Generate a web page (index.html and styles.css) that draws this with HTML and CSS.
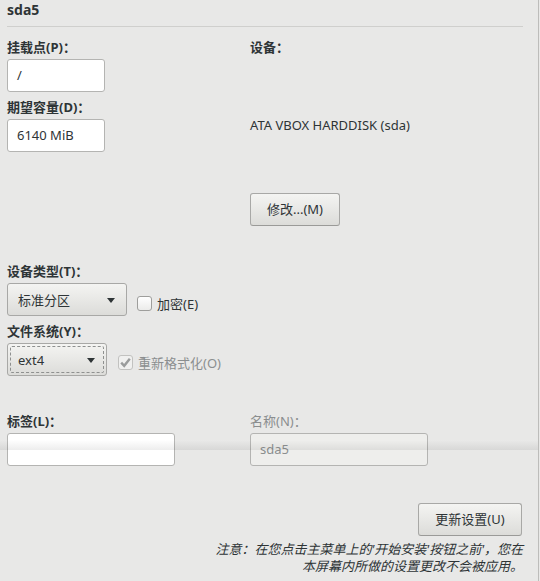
FILE: index.html
```html
<!DOCTYPE html>
<html lang="zh-CN">
<head>
<meta charset="utf-8">
<link rel="stylesheet" href="styles.css">
</head>
<body>
<div class="window">
  <div class="header"><h1 class="title">sda5</h1></div>

  <div class="top">
    <div class="col left">
      <div class="lbl">挂载点(P)：</div>
      <div class="entry w98">/</div>
      <div class="lbl lbl-gap">期望容量(D)：</div>
      <div class="entry w98">6140 MiB</div>
    </div>
    <div class="col right">
      <div class="lbl">设备：</div>
      <div class="device">ATA VBOX HARDDISK (sda)</div>
      <div class="btn modify">修改...(M)</div>
    </div>
  </div>

  <div class="types">
    <div class="lbl">设备类型(T)：</div>
    <div class="row">
      <div class="combo c-type"><span>标准分区</span><span class="arrow"></span></div>
      <div class="check c1"><span class="box"></span><span class="ctext">加密(E)</span></div>
    </div>
    <div class="lbl lbl-gap">文件系统(Y)：</div>
    <div class="row">
      <div class="combo c-fs focused"><span>ext4</span><span class="arrow"></span></div>
      <div class="check c2 disabled">
        <span class="box checked"><svg viewBox="0 0 15 15" width="15" height="15"><path d="M3.2 7.6 L6.2 10.8 L11.8 3.8" fill="none" stroke="#9a9c9c" stroke-width="2.4" stroke-linejoin="miter"/></svg></span>
        <span class="ctext">重新格式化(O)</span>
      </div>
    </div>
  </div>

  <div class="names">
    <div class="col">
      <div class="lbl">标签(L)：</div>
      <div class="entry w168"></div>
    </div>
    <div class="col">
      <div class="lbl muted">名称(N)：</div>
      <div class="entry w178 insensitive">sda5</div>
    </div>
  </div>

  <div class="footer">
    <div class="btn update">更新设置(U)</div>
    <p class="note">注意：在您点击主菜单上的'开始安装'按钮之前'，您在<br>本屏幕内所做的设置更改不会被应用。</p>
  </div>

  <div class="shade"></div>
</div>
</body>
</html>
```

FILE: styles.css
```css
* { box-sizing: border-box; }

html, body {
  margin: 0;
  padding: 0;
  height: 100%;
  background: #e8e8e7;
}

body {
  font-family: "Noto Sans", "Noto Sans CJK SC", sans-serif;
  font-size: 13px;
  color: #2e3436;
  overflow: hidden;
}

.window {
  position: relative;
  width: 539px;
  height: 581px;
  border-right: 1px solid #bcbcba;
}

.header {
  margin: 0 15px 0 7px;
  height: 27px;
  border-bottom: 1px solid #cfcfcd;
}

.title {
  margin: 0;
  font-size: 14px;
  font-weight: bold;
  line-height: 20px;
}

.lbl {
  height: 16px;
  line-height: 16px;
  margin-bottom: 4px;
  font-weight: bold;
  font-size: 13px;
  white-space: nowrap;
}

.lbl.muted {
  color: #8b8e8f;
  font-weight: normal;
}

.lbl-gap { margin-top: 7px; }

.top {
  display: grid;
  grid-template-columns: 243px 1fr;
  padding-left: 7px;
  margin-top: 12px;
}

.col {
  display: flex;
  flex-direction: column;
  align-items: flex-start;
}

.entry {
  height: 33px;
  line-height: 31px;
  padding: 0 9px;
  background: #ffffff;
  border: 1px solid #b4b4b2;
  border-radius: 3px;
  font-size: 13px;
  white-space: nowrap;
}

.entry.insensitive {
  background: #eeeeec;
  color: #8b8e8f;
}

.w98 { width: 98px; }
.w168 { width: 168px; }
.w178 { width: 178px; }

.device {
  margin-top: 58px;
  height: 16px;
  line-height: 16px;
  font-size: 13px;
}

.btn {
  height: 33px;
  line-height: 31px;
  text-align: center;
  border: 1px solid #a8a8a6;
  border-bottom-color: #9a9a98;
  border-radius: 3px;
  background: linear-gradient(#f4f4f2, #dcdcd9);
  font-size: 13px;
  white-space: nowrap;
}

.modify {
  width: 90px;
  margin-top: 60px;
}

.types {
  padding-left: 7px;
  margin-top: 37px;
}

.row {
  display: flex;
  align-items: flex-start;
}

.combo {
  position: relative;
  height: 33px;
  display: flex;
  align-items: center;
  justify-content: space-between;
  padding: 0 11px 0 10px;
  border: 1px solid #a8a8a6;
  border-radius: 3px;
  background: linear-gradient(#f4f4f2, #dcdcd9);
}

.c-type { width: 120px; }
.c-fs { width: 100px; }

.combo.focused::after {
  content: "";
  position: absolute;
  inset: 2px;
  border: 1px dashed #8e908f;
  border-radius: 2px;
}

.arrow {
  width: 0;
  height: 0;
  border-left: 4.5px solid transparent;
  border-right: 4.5px solid transparent;
  border-top: 5px solid #2e3436;
  margin-top: 1px;
}

.check {
  display: flex;
  align-items: center;
  height: 15px;
}

.c1 { margin: 13px 0 0 10px; }
.c2 { margin: 12px 0 0 11px; }

.box {
  width: 15px;
  height: 15px;
  border: 1px solid #9e9e9c;
  border-radius: 3px;
  background: linear-gradient(#ffffff, #ebebea);
  display: block;
}

.box.checked {
  border-color: #c2c2c0;
  background: #f0f0ef;
  position: relative;
}

.box.checked svg {
  position: absolute;
  left: -1px;
  top: -1px;
}

.ctext {
  margin-left: 5px;
  line-height: 16px;
}

.disabled .ctext { color: #8b8e8f; }

.names {
  display: grid;
  grid-template-columns: 243px 1fr;
  padding-left: 7px;
  margin-top: 37px;
}

.footer {
  display: flex;
  flex-direction: column;
  align-items: flex-end;
  padding-right: 15px;
  margin-top: 37px;
}

.update {
  width: 104px;
  margin-right: 1px;
}

.note {
  margin: 5px 0 0 0;
  font-style: italic;
  text-align: right;
  line-height: 17px;
  font-size: 13px;
}

.shade {
  position: absolute;
  left: 0;
  top: 440px;
  width: 538px;
  height: 10px;
  background: linear-gradient(rgba(255,255,255,0.05), rgba(0,0,0,0.07));
  pointer-events: none;
}
```
